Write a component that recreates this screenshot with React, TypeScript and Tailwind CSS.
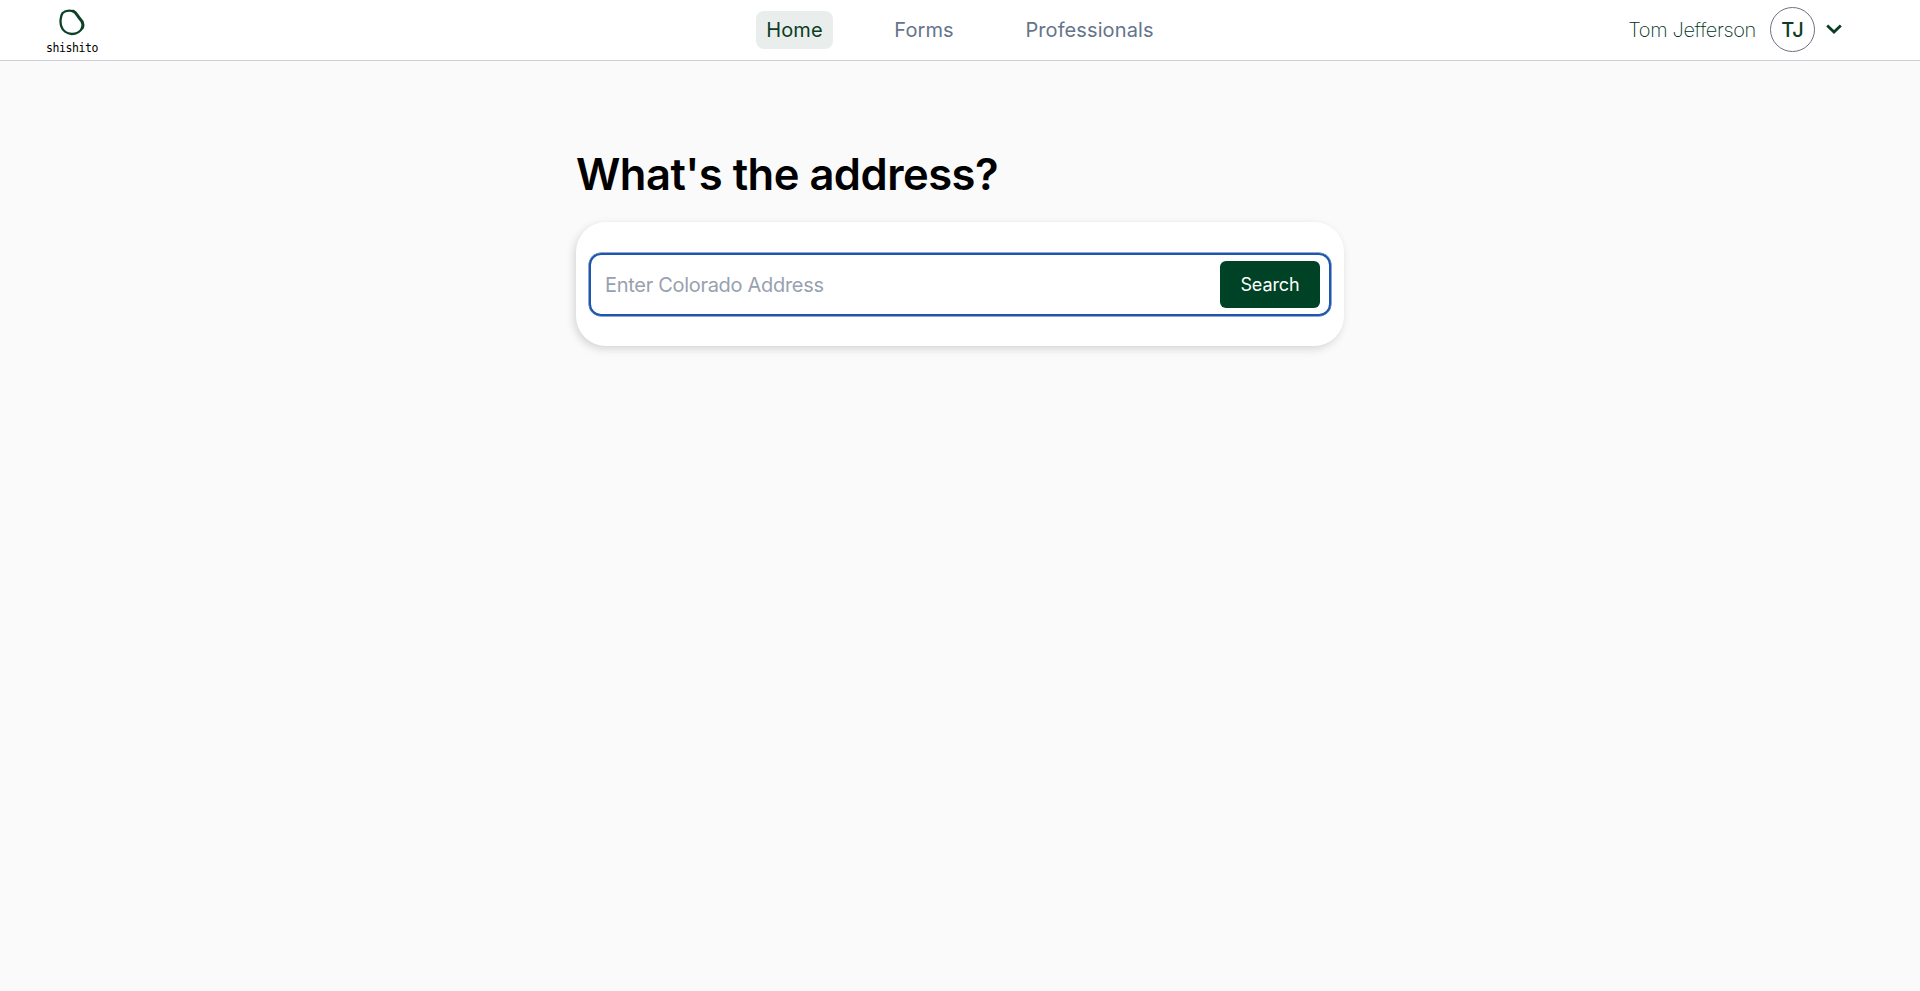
import React, { useState } from 'react';

interface NavItem {
  label: string;
  className: string;
}

const navItems: NavItem[] = [
  { label: 'Home', className: 'w-[77px]' },
  { label: 'Forms', className: 'w-[78px]' },
  { label: 'Professionals', className: 'w-[149px]' }
];

const Logo: React.FC = () => (
  <a href="#" className="flex w-[52px] flex-col items-center">
    <svg className="h-[27px] w-[28px]" viewBox="0 0 28 27" fill="none" stroke="#0b4127" strokeLinecap="round" strokeLinejoin="round">
      <path strokeWidth="2.3" d="M15.2 2.2C11.6 1.4 7.2 1.6 4.6 4C2.4 7.2 2 13.2 3.2 17.2C4.6 21.6 8.8 24.8 13.8 25C18.4 25 22.4 22.6 24.4 18.8" />
      <path strokeWidth="3" d="M15.2 2.2C18.6 3.4 19.4 7.4 22 9.8C24.6 12.2 25.6 15.8 24.2 19" />
    </svg>
    <span className="mt-[5px] font-['DejaVu_Sans_Mono',monospace] text-[11.5px] leading-[14px] tracking-[-0.4px] text-black">shishito</span>
  </a>
);

const Header: React.FC = () => {
  const [active, setActive] = useState('Home');

  return (
    <header className="grid h-[61px] grid-cols-[1fr_auto_1fr] items-center border-b border-[#cdd0d6] bg-white pb-px">
      <div className="flex pl-[46px] pt-[5px]">
        <Logo />
      </div>

      <nav className="flex items-center gap-[52px]">
        {navItems.map(item => (
          <button
            key={item.label}
            onClick={() => setActive(item.label)}
            className={`${item.className} h-[38px] rounded-lg text-center text-[20px] tracking-[0.1px] ${
              active === item.label ? 'bg-[#e9eeec] text-[#0b3d24]' : 'text-[#64748b]'
            }`}
          >
            {item.label}
          </button>
        ))}
      </nav>

      <div className="flex items-center justify-end pr-[78px]">
        <span className="mr-3.5 text-[20px] font-extralight tracking-[-0.35px] text-[#00301a]">Tom Jefferson</span>
        <div className="flex size-[45px] items-center justify-center rounded-full border border-[#6b7280] text-[20px] font-[450] text-[#0b3d24]">
          TJ
        </div>
        <svg className="mb-0.5 ml-[11px] h-[10px] w-[16px]" viewBox="0 0 16 10" fill="none" stroke="#0b3d24" strokeWidth="2.8">
          <path d="M1.2 1.6L8 8L14.8 1.6" />
        </svg>
      </div>
    </header>
  );
};

const AddressSearch: React.FC = () => {
  const [address, setAddress] = useState('');

  return (
    <form
      onSubmit={(e) => e.preventDefault()}
      className="flex h-[124px] items-center rounded-[30px] bg-white pl-[12.5px] pr-[13.5px] shadow-[-2px_3px_8px_rgba(0,0,0,0.15)]"
    >
      <div className="flex h-[63px] w-full items-center rounded-xl border-[2.5px] border-[#1d56ab] pl-[14.5px] pr-[9px] shadow-[0_0_0_0.5px_#1d56ab]">
        <input
          type="text"
          value={address}
          onChange={(e) => setAddress(e.target.value)}
          className="mt-px min-w-0 flex-1 text-[20px] tracking-[-0.3px] text-gray-900 outline-none placeholder:text-gray-400"
          placeholder="Enter Colorado Address"
        />
        <button type="submit" className="h-[47px] w-[100px] rounded-md bg-[#004225] pl-px text-[18px] tracking-[-0.1px] text-white">
          Search
        </button>
      </div>
    </form>
  );
};

const App: React.FC = () => {
  return (
    <div className="min-h-screen bg-[#fafafa] font-['Inter',sans-serif]">
      <Header />
      <main className="mx-auto w-[768px] pt-[85px]">
        <h1 className="mb-5 text-[43.5px] leading-[56px] font-semibold tracking-[-0.5px] text-black">What's the address?</h1>
        <AddressSearch />
      </main>
    </div>
  );
};

export default App;
